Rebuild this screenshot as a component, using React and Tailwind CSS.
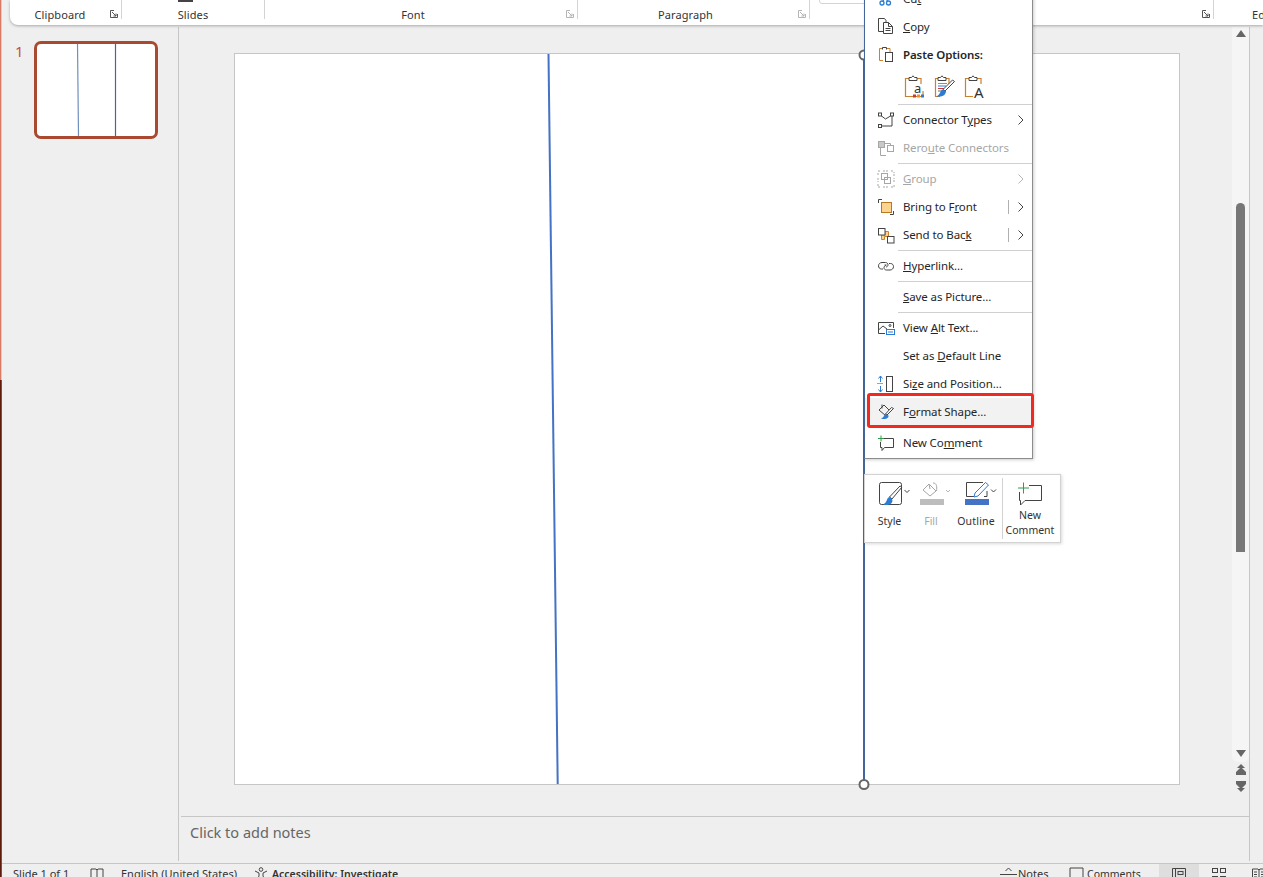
import React from 'react';

const ORANGE = '#c9812f';
const BLUE = '#2b7cd3';
const DARK = '#444444';
const GRAY = '#a6a6a6';

const CutIcon = () => (
  <svg width="20" height="20" viewBox="0 0 20 20" fill="none" stroke={BLUE} strokeWidth="1.3">
    <circle cx="6" cy="14" r="2" />
    <circle cx="12.5" cy="14" r="2" />
    <path d="M7 12L12 3M11.5 12L6.5 3" />
  </svg>
);

const CopyIcon = () => (
  <svg width="20" height="20" viewBox="0 0 20 20" fill="none" stroke={DARK}>
    <path d="M7.5 14.5H2.5V1.5H8.5L10 3.5V5" />
    <path d="M7.5 5.5H12.5L16.5 9.5V16.5H7.5Z" fill="#fff" />
    <path d="M12.5 5.5V9.5H16.5M9.5 11.5H14.5M9.5 13.5H14.5" />
  </svg>
);

const PasteHeadIcon = () => (
  <svg width="20" height="20" viewBox="0 0 20 20" fill="none">
    <path d="M7 15.5H3.5V3.5H6M11 3.5H14V7" stroke={ORANGE} />
    <path d="M6.5 4.5V2.5H10.5V4.5" stroke={DARK} />
    <rect x="9.5" y="7.5" width="7" height="9" fill="#fff" stroke={DARK} />
  </svg>
);

const ClipBoard = ({ children }) => (
  <svg width="22" height="24" viewBox="0 0 22 24" fill="none">
    <path d="M5 3.5H1.5V21.5H19V16M13 3.5H17V9" stroke={ORANGE} strokeWidth="1.2" />
    <path d="M5 5.5V2.5H7.5L9 0.8L10.5 2.5H13V5.5Z" fill="#fff" stroke={DARK} />
    {children}
  </svg>
);

const PasteKeepIcon = () => (
  <ClipBoard>
    <text x="10" y="18" fontSize="13" fill="#333" fontFamily="Noto Sans, sans-serif">a</text>
    <rect x="9" y="19.5" width="3" height="3" fill="#d13438" />
    <rect x="13" y="19.5" width="3" height="3" fill="#e8912d" />
    <rect x="17" y="19.5" width="3" height="3" fill="#2b7cd3" />
  </ClipBoard>
);

const PasteMergeIcon = () => (
  <svg width="22" height="24" viewBox="0 0 22 24" fill="none">
    <path d="M4 3.5H1.5V21.5H6M11 3.5H15V9" stroke={ORANGE} strokeWidth="1.2" />
    <path d="M4 5.5V2.5H6.5L8 0.8L9.5 2.5H12V5.5Z" fill="#fff" stroke={DARK} />
    <path d="M4 8.5H13" stroke="#c9812f" />
    <path d="M4 11H12" stroke="#2b7cd3" />
    <path d="M4 13.5H10" stroke="#d13438" />
    <path d="M4 16H8" stroke="#666" />
    <path d="M20.5 6.5L11 16L9 14.5L18.5 5Z" fill="#fff" stroke={DARK} />
    <path d="M9 14.5C6 15 7 19 2.5 21.5C8 22.5 12 20 12 16Z" fill={BLUE} />
  </svg>
);

const PasteTextIcon = () => (
  <ClipBoard>
    <rect x="9" y="11" width="13" height="13" fill="#fff" />
    <text x="10" y="23" fontSize="15" fill="#333" fontFamily="Noto Sans, sans-serif">A</text>
  </ClipBoard>
);

const ConnectorIcon = () => (
  <svg width="20" height="20" viewBox="0 0 20 20" fill="none" stroke={DARK}>
    <rect x="2.5" y="3" width="3" height="3" />
    <rect x="14.5" y="3" width="3" height="3" />
    <rect x="2.5" y="14.5" width="3" height="3" />
    <path d="M5.5 6L9.5 9L14.5 6M16 6V16H5.5" />
  </svg>
);

const RerouteIcon = () => (
  <svg width="20" height="20" viewBox="0 0 20 20" fill="none" stroke={GRAY}>
    <rect x="2.5" y="3.5" width="6" height="6" fill="#c8c8c8" />
    <rect x="11.5" y="7.5" width="6" height="6" />
    <path d="M8.5 5.5H14.5V7.5M4.5 9.5V17.5H10" />
  </svg>
);

const GroupIcon = () => (
  <svg width="20" height="20" viewBox="0 0 20 20" fill="none" stroke={GRAY}>
    <path d="M2 2H5M7 2H13M15 2H18M2 4V7M2 9V13M2 15V18H5M7 18H13M15 18H18V15M18 13V9M18 7V3" strokeDasharray="2 1" />
    <rect x="5.5" y="4.5" width="6" height="6" />
    <rect x="8.5" y="8.5" width="6" height="6" />
  </svg>
);

const FrontIcon = () => (
  <svg width="20" height="20" viewBox="0 0 20 20" fill="none" stroke={DARK}>
    <path d="M2.5 6V2.5H6M14 17.5H17.5V14" />
    <rect x="5.5" y="5.5" width="10" height="10" fill="#fcd38f" stroke="#b8781f" />
  </svg>
);

const BackIcon = () => (
  <svg width="20" height="20" viewBox="0 0 20 20" fill="none" stroke={DARK}>
    <path d="M9 6.5H12.5V11.5H8.5V14.5H5.5V10H9Z" fill="#fcd38f" stroke="#c9812f" />
    <rect x="2.5" y="3.5" width="6.5" height="6.5" fill="#fff" />
    <rect x="11.5" y="11.5" width="6.5" height="6.5" fill="#fff" />
  </svg>
);

const LinkIcon = () => (
  <svg width="20" height="20" viewBox="0 0 20 20" fill="none" stroke={DARK}>
    <path d="M7 13H5.5C3.5 13 2.5 11.5 2.5 9.8C2.5 8 4 6.5 6 6.5H9.5C11 6.5 12 7.5 12 8.8C12 10 11 11 10 11" />
    <path d="M8.5 9H10.5M13 7.5H14.5C16.5 7.5 17.5 9 17.5 10.7C17.5 12.5 16 14 14 14H10.5C9 14 8 13 8 11.7C8 10.5 9 9.5 10 9.5" />
  </svg>
);

const AltIcon = () => (
  <svg width="20" height="20" viewBox="0 0 20 20" fill="none" stroke={DARK}>
    <path d="M9 15.5H2.5V4.5H17.5V10" />
    <path d="M2.5 12L7 8L11 11" />
    <circle cx="14" cy="7.5" r="1" />
    <rect x="10.5" y="11.5" width="8" height="5" fill="#fff" stroke={BLUE} />
    <path d="M12 14H17" stroke={BLUE} />
  </svg>
);

const SizeIcon = () => (
  <svg width="20" height="20" viewBox="0 0 20 20" fill="none">
    <path d="M4.5 2V8M4.5 12V18M2.5 4.5L4.5 2L6.5 4.5M2.5 15.5L4.5 18L6.5 15.5" stroke={BLUE} />
    <path d="M1.5 9.5H7.5" stroke="#444" strokeDasharray="1 1" />
    <rect x="10.5" y="2.5" width="6" height="15" stroke={DARK} />
  </svg>
);

const FormatIcon = () => (
  <svg width="20" height="20" viewBox="0 0 20 20" fill="none">
    <path d="M3 8L8 3L14 9L9.5 13.5Z" stroke={DARK} />
    <path d="M6 2.5V6.5" stroke={DARK} />
    <path d="M17.5 6.5L11 13L9.5 12L15.5 5.5Z" fill="#fff" stroke={DARK} />
    <path d="M9.5 12C7.5 13 8.5 15.5 5 16.5C9 18 13 16.5 12.5 13.5Z" fill={BLUE} />
  </svg>
);

const CommentIcon = () => (
  <svg width="20" height="20" viewBox="0 0 20 20" fill="none">
    <path d="M8 5.5H17.5V14.5H8.5L6 17.5V14.5H4.5V9" stroke={DARK} />
    <path d="M5 2.5V8.5M2 5.5H8" stroke="#2f9e44" />
  </svg>
);

const menuRows = [
  { label: <>Cu<u>t</u></>, icon: <CutIcon /> },
  { label: <><u>C</u>opy</>, icon: <CopyIcon /> },
  { label: 'Paste Options:', icon: <PasteHeadIcon />, bold: true },
  { paste: true },
  { label: <>Connector T<u>y</u>pes</>, icon: <ConnectorIcon />, arrow: true },
  { label: <>Rero<u>u</u>te Connectors</>, icon: <RerouteIcon />, disabled: true },
  { sep: true },
  { label: <><u>G</u>roup</>, icon: <GroupIcon />, disabled: true, arrow: true },
  { label: <>Bring to F<u>r</u>ont</>, icon: <FrontIcon />, arrow: true, split: true },
  { label: <>Send to Bac<u>k</u></>, icon: <BackIcon />, arrow: true, split: true },
  { sep: true },
  { label: <><u>H</u>yperlink...</>, icon: <LinkIcon /> },
  { sep: true },
  { label: <><u>S</u>ave as Picture...</> },
  { sep: true },
  { label: <>View <u>A</u>lt Text...</>, icon: <AltIcon /> },
  { label: <>Set as <u>D</u>efault Line</> },
  { label: <>Si<u>z</u>e and Position...</>, icon: <SizeIcon /> },
  { label: <>F<u>o</u>rmat Shape...</>, icon: <FormatIcon />, active: true },
  { sep: true },
  { label: <>New Co<u>m</u>ment</>, icon: <CommentIcon /> },
];

function Chevron({ color = '#444' }) {
  return (
    <svg width="8" height="10" viewBox="0 0 8 10" fill="none" stroke={color}>
      <path d="M1.5 0.5L6 5L1.5 9.5" />
    </svg>
  );
}

function ContextMenu() {
  return (
    <div className="absolute left-[864px] top-[-16px] z-20 w-[169px] border border-[#8c8c8c] border-l-[#44679b] bg-white pb-[1px] text-[11.5px] tracking-[-0.1px] text-[#262626] shadow-[1px_1px_3px_rgba(0,0,0,0.2)]">
      {menuRows.map((row, i) => {
        if (row.sep) {
          return (
            <div key={i} className="flex h-[3px] items-center pl-[33px]">
              <div className="h-px w-full bg-[#d0d0d0]" />
            </div>
          );
        }
        if (row.paste) {
          return (
            <div key={i} className="mb-[1px] ml-[33px] flex h-[36px] items-start gap-[8px] border-b border-[#d0d0d0] pl-[6px] pt-[6px]">
              <PasteKeepIcon />
              <PasteMergeIcon />
              <PasteTextIcon />
            </div>
          );
        }
        return (
          <div
            key={i}
            className={`flex h-[28px] items-center ${row.disabled ? 'text-[#a6a6a6]' : ''} ${row.bold ? 'font-semibold' : ''} ${row.active ? 'bg-[#f2f2f2]' : ''}`}
          >
            <span className="flex w-[38px] shrink-0 items-center pl-[11px]">{row.icon}</span>
            <span className="flex-1 whitespace-nowrap">{row.label}</span>
            {row.split && <span className="mr-[8px] h-[14px] w-px bg-[#b0b0b0]" />}
            {row.arrow && (
              <span className="mr-[7px]">
                <Chevron color={row.disabled ? '#b5b5b5' : '#444'} />
              </span>
            )}
          </div>
        );
      })}
    </div>
  );
}

function MiniToolbar() {
  return (
    <div className="absolute left-[864px] top-[474px] z-20 flex h-[69px] w-[197px] border border-[#d2d2d2] bg-white pl-[2px] text-[10.5px] text-[#333] shadow-[1px_1px_3px_rgba(0,0,0,0.15)]">
      <div className="flex w-[45px] flex-col items-center pt-[6px]">
        <svg width="45" height="26" viewBox="0 0 45 26" fill="none">
          <rect x="12.5" y="1.5" width="22" height="22" rx="2" stroke={DARK} />
          <path d="M35 6L25 18L22.5 16L33 5Z" fill="#fff" stroke={DARK} />
          <path d="M22.5 16C19 17 21 21 16 23.5C22 25.5 27 22 25 18Z" fill={BLUE} />
          <path d="M37.5 9L40 11.5L42.5 9" stroke={DARK} />
        </svg>
        <span className="mt-[7px]">Style</span>
      </div>
      <div className="flex w-[38px] flex-col items-center pt-[6px] text-[#a6a6a6]">
        <svg width="38" height="26" viewBox="0 0 38 26" fill="none">
          <path d="M11 9L17 3L24 10L18 15Z" stroke="#a6a6a6" />
          <path d="M17 3L18 8M21 2C25 2 25 6 24.5 10" stroke="#a6a6a6" />
          <rect x="8" y="18" width="24" height="6" fill="#bdbdbd" />
          <path d="M34 9L36 11L38 9" stroke="#b5b5b5" />
        </svg>
        <span className="mt-[7px]">Fill</span>
      </div>
      <div className="flex w-[52px] flex-col items-center pt-[6px]">
        <svg width="52" height="26" viewBox="0 0 52 26" fill="none">
          <path d="M33 1.5H16.5V15.5H24M37 10V15.5H34" stroke={DARK} />
          <path d="M35.5 1.5L38.5 4L28 15L24 16L25 12Z" fill="#fff" stroke={BLUE} />
          <rect x="15" y="18" width="24" height="6" fill="#4472c4" />
          <path d="M41 8.5L43.5 11L46 8.5" stroke={DARK} />
        </svg>
        <span className="mt-[7px] tracking-[0.2px]">Outline</span>
      </div>
      <div className="my-[3px] w-px bg-[#d2d2d2]" />
      <div className="flex flex-1 flex-col items-center pr-[3px] pt-[7px] leading-[15px]">
        <svg width="26" height="24" viewBox="0 0 26 24" fill="none">
          <path d="M12 3.5H24.5V18.5H8L3.5 23V18.5H2.5V10" stroke={DARK} />
          <path d="M6.5 0.5V11.5M1 6H12" stroke="#2f9e44" />
        </svg>
        <span className="mt-[2px]">New</span>
        <span>Comment</span>
      </div>
    </div>
  );
}

function Launcher({ dim }) {
  const c = dim ? '#b5b5b5' : '#555';
  return (
    <svg className="absolute bottom-[1px] right-[3px]" width="8" height="8" viewBox="0 0 8 8" fill="none" stroke={c}>
      <path d="M7.5 4V7.5H0.5V0.5H4M2 2L6 6M6 3.5V6H3.5" />
    </svg>
  );
}

function Ribbon() {
  return (
    <div className="relative z-10 ml-[8px] flex h-[25px] shrink-0 rounded-bl-[8px] bg-white text-[11px] leading-[16px] tracking-[0.1px] text-[#333] shadow-[0_1px_3px_rgba(0,0,0,0.3)]">
      <div className="relative flex h-[19px] w-[112px] shrink-0 justify-center border-r border-[#d4d4d4] pr-[11px] pt-[7px]">
        Clipboard
        <Launcher />
      </div>
      <div className="relative flex h-[19px] w-[143px] shrink-0 justify-center border-r border-[#d4d4d4] pt-[7px]">
        <div className="absolute left-[56px] top-0 h-[2px] w-[15px] bg-[#444]" />
        Slides
      </div>
      <div className="relative flex h-[19px] w-[313px] shrink-0 justify-center border-r border-[#d4d4d4] pr-[16px] pt-[7px]">
        Font
        <Launcher dim />
      </div>
      <div className="relative flex h-[19px] w-[232px] shrink-0 justify-center border-r border-[#d4d4d4] pr-[16px] pt-[7px]">
        Paragraph
        <Launcher dim />
      </div>
      <div className="relative h-[19px] w-[404px] shrink-0 border-r border-[#d4d4d4]">
        <div className="absolute left-[9px] top-[-8px] h-[12px] w-[60px] rounded-[3px] border border-[#d4d4d4]" />
        <Launcher />
      </div>
      <div className="h-[19px] pl-[38px] pt-[7px] whitespace-nowrap">Ed</div>
    </div>
  );
}

function Scrollbar() {
  return (
    <div className="flex w-[17px] shrink-0 flex-col items-center pt-[2px]">
      <div className="flex h-[735px] w-full flex-col items-center rounded-b-[6px] bg-[#f5f5f5] pt-[3px]">
        <div className="h-0 w-0 border-x-[5px] border-b-[7px] border-x-transparent border-b-[#666]" />
        <div className="mt-[166px] h-[349px] w-[9px] rounded-t-[5px] bg-[#777]" />
        <div className="mt-[198px] h-0 w-0 border-x-[5px] border-t-[7px] border-x-transparent border-t-[#666]" />
      </div>
      <svg className="mt-[2px]" width="10" height="11" viewBox="0 0 10 11" fill="#666">
        <path d="M5 0L9 4H1ZM5 3L10 8V11H0V8Z" />
      </svg>
      <svg className="mt-[6px]" width="10" height="11" viewBox="0 0 10 11" fill="#666">
        <path d="M0 0H10V3L5 8L0 3ZM1 7H9L5 11Z" />
      </svg>
    </div>
  );
}

function Slide() {
  return (
    <div className="relative h-[732px] w-[946px] border border-[#c6c6c6] bg-white">
      <svg className="overflow-visible" width="944" height="730" viewBox="0 0 944 730" fill="none">
        <path d="M313.5 0L322.7 730" stroke="#4472c4" strokeWidth="2" />
        <path d="M629 0V730" stroke="#44679b" strokeWidth="2" />
        <circle cx="629" cy="1" r="4.5" fill="#fff" stroke="#666" strokeWidth="2" />
        <circle cx="629" cy="730.5" r="4.5" fill="#fff" stroke="#666" strokeWidth="2" />
      </svg>
    </div>
  );
}

function Thumbnail() {
  return (
    <div className="flex w-[176px] shrink-0 pt-[16px]">
      <span className="w-[32px] pl-[13px] text-[15px] leading-[20px] text-[#c0533a]">1</span>
      <div className="h-[98px] w-[124px] rounded-[7px] border-[3px] border-[#a9492f] bg-white">
        <svg width="118" height="92" viewBox="0 0 118 92" fill="none">
          <path d="M40.5 0L41.5 92" stroke="#6f8fbd" strokeWidth="1.2" />
          <path d="M78.5 0V92" stroke="#44679b" strokeWidth="1.2" />
        </svg>
      </div>
    </div>
  );
}

function StatusBar() {
  return (
    <div className="relative flex h-[22px] shrink-0 items-start border-t border-[#c6c6c6] text-[11px] leading-[20px] text-[#333]">
      <span className="ml-[11px] w-[77px]">Slide 1 of 1</span>
      <svg className="mt-[4px]" width="14" height="14" viewBox="0 0 14 14" fill="none" stroke={DARK}>
        <path d="M1 1H6L7 2L8 1H13V12H1ZM7 2V12" />
      </svg>
      <span className="ml-[17px] w-[133px]">English (United States)</span>
      <svg className="mt-[3px]" width="14" height="14" viewBox="0 0 14 14" fill="none" stroke={DARK}>
        <circle cx="7" cy="2.5" r="1.8" />
        <path d="M1 4L5 6V9L3 13M13 4L9 6V9L11 13" />
      </svg>
      <span className="ml-[4px] text-[10.5px] font-semibold">Accessibility: Investigate</span>
      <div className="ml-auto flex items-start">
        <svg className="mt-[3px]" width="17" height="10" viewBox="0 0 17 10" fill="none" stroke={DARK}>
          <path d="M0 7.5H17M5.5 4L8.5 1L11.5 4" />
        </svg>
        <span className="ml-[1px] w-[51px]">Notes</span>
        <svg className="mt-[3px]" width="15" height="14" viewBox="0 0 15 14" fill="none" stroke={DARK}>
          <path d="M1 1H14V11H5L3 13V11H1Z" />
        </svg>
        <span className="ml-[3px] w-[72px] text-[10.5px]">Comments</span>
        <div className="flex h-[20px] w-[40px] justify-center bg-[#dedede] pt-[4px]">
          <svg width="14" height="14" viewBox="0 0 14 14" fill="none" stroke={DARK}>
            <path d="M0.5 13V0.5H13.5V13M3.5 0.5V13" />
            <rect x="6" y="3.5" width="5" height="3" />
          </svg>
        </div>
        <svg className="ml-[13px] mt-[4px]" width="14" height="14" viewBox="0 0 14 14" fill="none" stroke={DARK}>
          <rect x="0.5" y="0.5" width="5" height="4" />
          <rect x="8.5" y="0.5" width="5" height="4" />
          <rect x="0.5" y="8.5" width="5" height="4" />
          <rect x="8.5" y="8.5" width="5" height="4" />
        </svg>
        <svg className="ml-[26px] mr-[-3px] mt-[4px]" width="14" height="14" viewBox="0 0 14 14" fill="none" stroke={DARK}>
          <path d="M0.5 1H6L7 2L8 1H13.5V13H0.5ZM7 2V13M2 4H5M2 6.5H5M2 9H5M9 4H12M9 6.5H12M9 9H12" />
        </svg>
      </div>
    </div>
  );
}

export default function App() {
  return (
    <div className="relative flex h-[877px] w-[1263px] overflow-hidden bg-[#efefef] font-['Noto_Sans','Open_Sans',sans-serif]">
      <div className="flex w-[2px] shrink-0 flex-col">
        <div className="h-[380px] border-r border-[#f0c4b8] bg-[#d97a63]" />
        <div className="flex-1 border-r border-[#8a4a3c] bg-[#5e1a0e]" />
      </div>
      <div className="flex min-w-0 flex-1 flex-col">
        <Ribbon />
        <div className="flex h-[838px] shrink-0 pb-[2px]">
          <Thumbnail />
          <div className="mt-[2px] flex w-[1072px] flex-col border-x border-[#c6c6c6]">
            <div className="flex h-[789px] shrink-0 pl-[55px]">
              <div className="flex-1 pt-[26px]">
                <Slide />
              </div>
              <div className="mt-[-2px]">
                <Scrollbar />
              </div>
            </div>
            <div className="ml-[2px] flex-1 border-t border-[#c6c6c6] pl-[9px] pt-[5px] text-[14.5px] text-[#666]">
              Click to add notes
            </div>
          </div>
        </div>
        <StatusBar />
      </div>
      <ContextMenu />
      <div className="absolute left-[867px] top-[393px] z-30 h-[35px] w-[167px] rounded-[3px] border-[3px] border-[#f02a20]" />
      <MiniToolbar />
    </div>
  );
}
